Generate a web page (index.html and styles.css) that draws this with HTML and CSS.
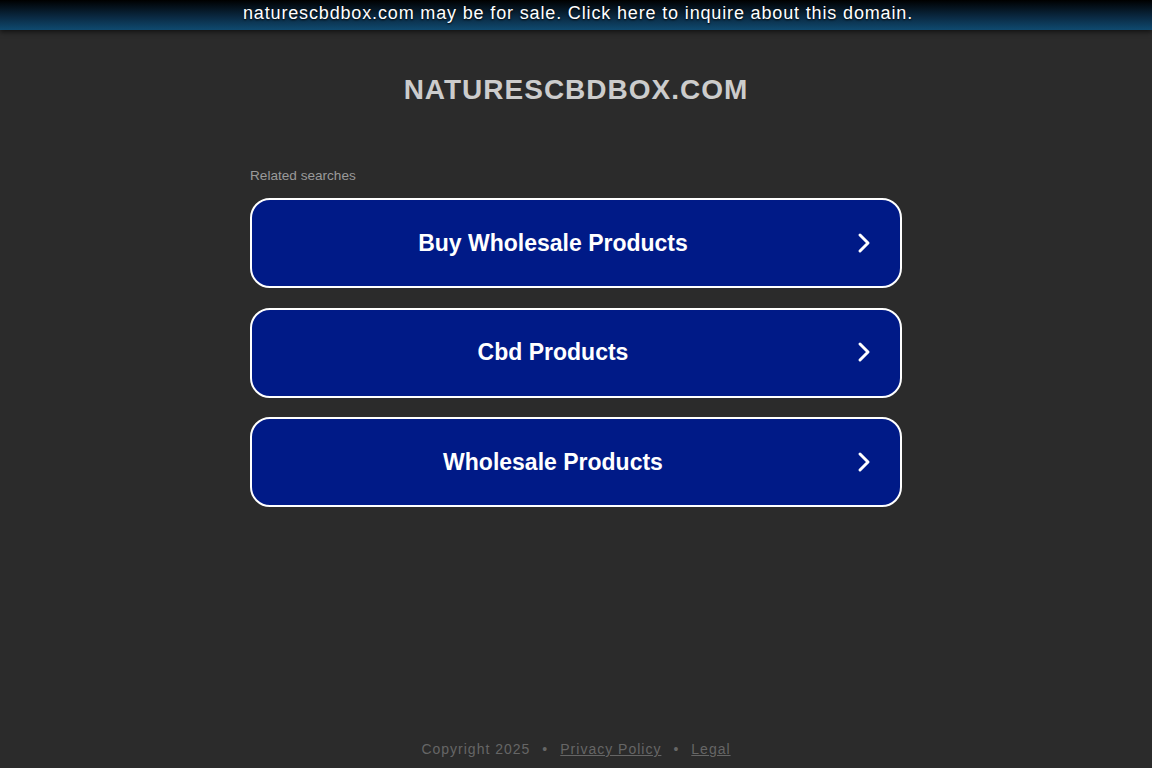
FILE: index.html
```html
<!DOCTYPE html>
<html>
<head>
<meta charset="utf-8">
<link rel="stylesheet" href="styles.css">
</head>
<body>
<div class="topbar"><a class="topbar-link" href="#">naturescbdbox.com may be for sale. Click here to inquire about this domain.</a></div>
<main class="main">
  <h1 class="domain">NATURESCBDBOX.COM</h1>
  <section class="related">
    <p class="related-title">Related searches</p>
    <a class="search" href="#"><span class="search-text">Buy Wholesale Products</span><svg class="chev" viewBox="0 0 16 24" width="16" height="24"><path d="M4 4 L12 12 L4 20" fill="none" stroke="#fff" stroke-width="3" stroke-linecap="round" stroke-linejoin="round"/></svg></a>
    <a class="search" href="#"><span class="search-text">Cbd Products</span><svg class="chev" viewBox="0 0 16 24" width="16" height="24"><path d="M4 4 L12 12 L4 20" fill="none" stroke="#fff" stroke-width="3" stroke-linecap="round" stroke-linejoin="round"/></svg></a>
    <a class="search" href="#"><span class="search-text">Wholesale Products</span><svg class="chev" viewBox="0 0 16 24" width="16" height="24"><path d="M4 4 L12 12 L4 20" fill="none" stroke="#fff" stroke-width="3" stroke-linecap="round" stroke-linejoin="round"/></svg></a>
  </section>
</main>
<footer class="footer">
  <span>Copyright 2025</span><span class="dot">•</span><a href="#" class="flink">Privacy Policy</a><span class="dot">•</span><a href="#" class="flink">Legal</a>
</footer>
</body>
</html>
```
FILE: styles.css
```css
html, body {
  margin: 0;
  padding: 0;
  height: 100%;
}
body {
  background: #2b2b2b;
  font-family: "Liberation Sans", Arial, sans-serif;
  display: flex;
  flex-direction: column;
  min-height: 768px;
}
.topbar {
  height: 30px;
  background: linear-gradient(to bottom, #000000 0%, #0a2840 55%, #0f4a70 100%);
  box-shadow: 0 2px 5px rgba(0,0,0,0.6);
  display: flex;
  justify-content: center;
  align-items: center;
  padding-left: 4px;
}
.topbar-link {
  color: #fff;
  text-decoration: none;
  font-size: 18px;
  letter-spacing: 0.85px;
  text-shadow: 0 1px 2px #000;
  margin-top: -4px;
}
.main {
  flex: 1;
  display: flex;
  flex-direction: column;
  align-items: center;
}
.domain {
  margin: 44px 0 0;
  font-size: 28px;
  font-weight: bold;
  color: #cccccc;
  letter-spacing: 1px;
  line-height: 32px;
}
.related {
  width: 652px;
  margin-top: 62px;
  display: flex;
  flex-direction: column;
  gap: 19.5px;
}
.related-title {
  margin: 0 0 -5.5px;
  font-size: 13.6px;
  color: #9a9a9a;
  line-height: 16px;
}
.search {
  box-sizing: border-box;
  height: 90px;
  border: 2px solid #ffffff;
  border-radius: 20px;
  background: #001a87;
  display: flex;
  align-items: center;
  text-decoration: none;
  padding: 0 28px 0 0;
}
.search-text {
  flex: 1;
  text-align: center;
  color: #ffffff;
  font-size: 23px;
  font-weight: bold;
  margin-left: -2px;
}
.chev {
  flex: none;
  margin-top: -1px;
}
.footer {
  display: flex;
  justify-content: center;
  align-items: center;
  font-size: 14px;
  color: #666666;
  letter-spacing: 1px;
  height: 38px;
  padding-top: 2px;
}
.dot {
  margin: 0 12px;
}
.flink {
  color: #666666;
}
```
